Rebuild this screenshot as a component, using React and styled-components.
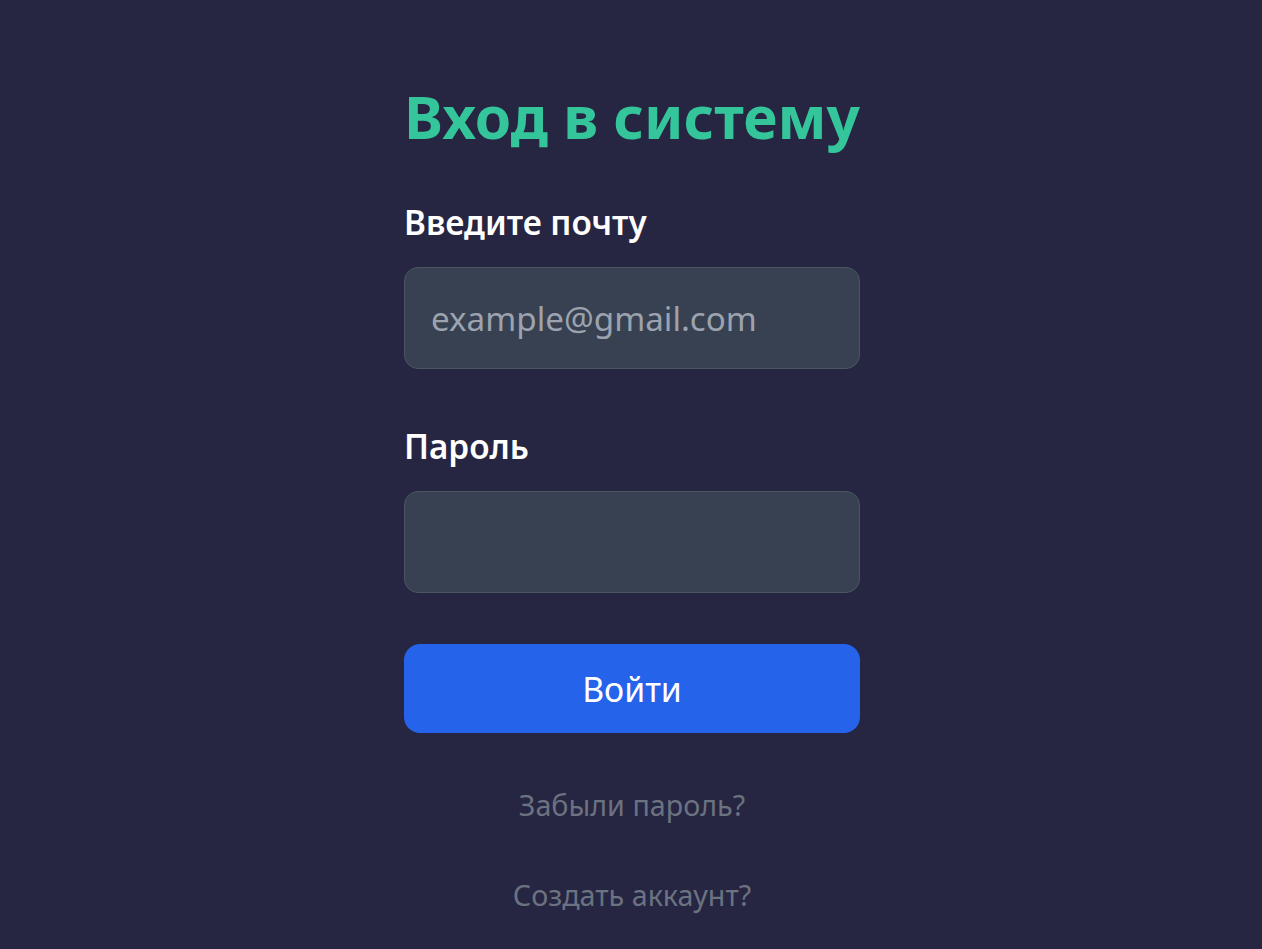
import React from "react";
import styled, { createGlobalStyle } from "styled-components";

const Global = createGlobalStyle`
  html, body { margin: 0; padding: 0; background: #262542; }
  body { font-family: "Noto Sans", "Open Sans", sans-serif; min-height: 949px; }
  * { box-sizing: border-box; }
`;

const Page = styled.main`
  min-height: 949px;
  display: flex;
  justify-content: center;
  padding: 86px 0 0 2px;
`;

const Form = styled.form`
  width: 456px;
  display: flex;
  flex-direction: column;
`;

const Title = styled.h1`
  margin: 0 0 58px;
  font-size: 58.6px;
  line-height: 60px;
  font-weight: 700;
  color: #34c59b;
  white-space: nowrap;
`;

const Label = styled.label`
  display: block;
  font-size: 33.3px;
  line-height: 36px;
  font-weight: 600;
  color: #ffffff;
  margin-bottom: 27px;
`;

const Input = styled.input`
  display: block;
  width: 100%;
  height: 102px;
  padding: 0 26px;
  background: #374151;
  border: 1px solid #4b5563;
  border-radius: 14px;
  color: #e5e7eb;
  font-family: inherit;
  font-size: 33.2px;
  outline: none;
  margin-bottom: ${(p) => p.$mb}px;
  &::placeholder { color: #9ca3af; }
`;

const Button = styled.button`
  height: 89px;
  width: 100%;
  border: none;
  border-radius: 16px;
  background: #2563eb;
  color: #ffffff;
  font-family: inherit;
  font-size: 33.8px;
  cursor: pointer;
  margin-bottom: 54px;
`;

const LinkText = styled.a`
  display: block;
  text-align: center;
  font-size: 28.7px;
  line-height: 36px;
  color: #6b7280;
  text-decoration: none;
  margin-bottom: ${(p) => p.$mb}px;
`;

export default function App() {
  return (
    <>
      <Global />
      <Page>
        <Form onSubmit={(e) => e.preventDefault()}>
          <Title>Вход в систему</Title>
          <Label htmlFor="email">Введите почту</Label>
          <Input id="email" type="email" placeholder="example@gmail.com" $mb={59} />
          <Label htmlFor="password">Пароль</Label>
          <Input id="password" type="password" $mb={51} />
          <Button type="submit">Войти</Button>
          <LinkText href="#" $mb={54}>Забыли пароль?</LinkText>
          <LinkText href="#" $mb={0}>Создать аккаунт?</LinkText>
        </Form>
      </Page>
    </>
  );
}
